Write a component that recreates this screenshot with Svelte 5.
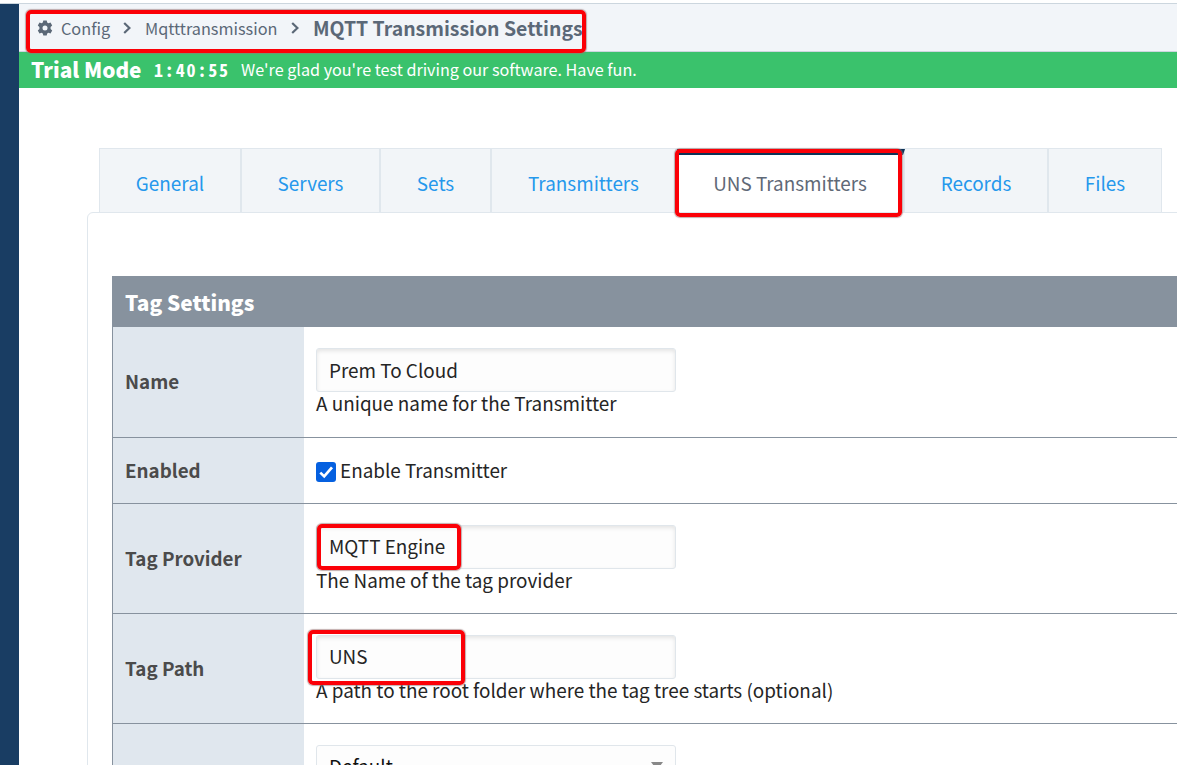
<script>
  const tabs = [
    { label: 'General', width: 142 },
    { label: 'Servers', width: 139 },
    { label: 'Sets', width: 111 },
    { label: 'Transmitters', width: 185 },
    { label: 'UNS Transmitters', width: 228, active: true },
    { label: 'Records', width: 144 },
    { label: 'Files', width: 113 }
  ];
</script>

<div class="page">
  <aside></aside>
  <main>
    <header>
      <svg class="gear" viewBox="0 0 16 16" width="16" height="16">
        <path fill-rule="evenodd" d="M6.300 .5h3.400l.5 2.100 1.200.7 2.100-.7 1.700 3-1.600 1.500v1.800l1.600 1.500-1.700 3-2.100-.7-1.200.7-.5 2.100H6.300l-.5-2.100-1.200-.7-2.100.7-1.700-3 1.600-1.500V7.100L.8 5.600l1.700-3 2.100.7 1.200-.7zM8 5.500a2.500 2.500 0 1 0 0 5 2.500 2.500 0 0 0 0-5z" />
      </svg>
      <span class="crumb config">Config</span>
      <svg class="chev" viewBox="0 0 8 12" width="8" height="12"><path d="M1.200 1 6.400 6l-5.200 5" /></svg>
      <span class="crumb module">Mqtttransmission</span>
      <svg class="chev" viewBox="0 0 8 12" width="8" height="12"><path d="M1.200 1 6.400 6l-5.200 5" /></svg>
      <strong>MQTT Transmission Settings</strong>
      <i class="mark mark-head"></i>
    </header>
    <div class="trial">
      <b>Trial Mode</b>
      <span class="timer">1:40:55</span>
      <span class="note">We're glad you're test driving our software. Have fun.</span>
    </div>
    <nav>
      {#each tabs as tab}
        <div class="tab" class:active={tab.active} style="width:{tab.width}px">
          <span>{tab.label}</span>
          {#if tab.active}<i class="mark mark-tab"></i>{/if}
        </div>
      {/each}
    </nav>
    <section class="panel">
      <div class="table">
        <h2>Tag Settings</h2>
        <div class="row first">
          <div class="label">Name</div>
          <div class="cell">
            <div class="input">Prem To Cloud</div>
            <p>A unique name for the Transmitter</p>
          </div>
        </div>
        <div class="row short">
          <div class="label">Enabled</div>
          <div class="cell check">
            <svg viewBox="0 0 20 20" width="20" height="20"><rect width="20" height="20" rx="3" fill="#0560e0" /><path d="M4.300 10.600 8.200 14.400 16 5.300" fill="none" stroke="#fff" stroke-width="2.700" /></svg>
            <span>Enable Transmitter</span>
          </div>
        </div>
        <div class="row">
          <div class="label">Tag Provider</div>
          <div class="cell">
            <div class="input raised">MQTT Engine<i class="mark mark-provider"></i></div>
            <p>The Name of the tag provider</p>
          </div>
        </div>
        <div class="row">
          <div class="label">Tag Path</div>
          <div class="cell">
            <div class="input raised">UNS<i class="mark mark-path"></i></div>
            <p>A path to the root folder where the tag tree starts (optional)</p>
          </div>
        </div>
        <div class="row">
          <div class="label"></div>
          <div class="cell">
            <div class="input select">Default<svg viewBox="0 0 12 8" width="12" height="8"><path d="M0 0h12L6 8z" fill="#888" /></svg></div>
          </div>
        </div>
      </div>
    </section>
  </main>
</div>

<style>
  :global(body) { background: #fff; overflow: hidden; }
  * { box-sizing: border-box; }
  .page {
    width: 1177px; height: 765px; overflow: hidden; display: flex; padding-top: 3px;
    font-family: "Noto Sans CJK SC", "Noto Sans", sans-serif;
    font-size: 18.900px; line-height: 26px; color: #252525; white-space: nowrap;
  }
  aside { width: 19px; flex: none; background: #193d63; border-top: 1px solid #ccd6de; }
  main { flex: 1; min-width: 0; }
  header {
    position: relative; height: 49px; display: flex; align-items: center; padding-left: 17px;
    background: #f2f5f9; border-top: 1px solid #ccd6de; border-bottom: 1px solid #ccd6de; color: #5b6877;
    font-size: 16.250px;
  }
  .gear { fill: #5b6877; margin: 1px 8px 0 1px; }
  .config { width: 49px; }
  .module { width: 133px; }
  .chev { fill: none; stroke: #5b6877; stroke-width: 2.200; margin: 1px 14px 0 13px; }
  strong { font-size: 19.430px; font-weight: 700; }
  .mark { position: absolute; border: 4px solid #fb0007; border-radius: 5px; box-shadow: 0 0 1px 1px #9b777799; z-index: 2; }
  .mark-head { left: 7px; top: 6px; width: 560px; height: 43px; }
  .trial { height: 36px; background: #3ac26c; color: #fff; display: flex; align-items: center; padding: 0 0 2px 12px; }
  .trial b { font-size: 20.800px; font-weight: 900; width: 123px; }
  .timer { font: 700 18px "Noto Sans Mono CJK SC", "Liberation Mono", monospace; letter-spacing: 1.850px; width: 87px; }
  .note { font-size: 16.150px; }
  nav { display: flex; width: 1063px; height: 64px; margin: 60px 0 0 80px; border-top: 1px solid #e0e7ed; border-left: 1px solid #e0e7ed; }
  .tab {
    position: relative; flex: none; height: 63px; display: flex; align-items: center; justify-content: center;
    border-right: 2px solid #e0e7ed; color: #2598ec; padding-top: 5px; background: #f2f5f8;
  }
  .tab:last-child { border-right-width: 1px; }
  .active { background: #fff; color: #5f6977; border-top: 6px solid #0c3357; padding-top: 0; }
  .active span { margin-top: -1px; }
  .mark-tab { left: -2px; top: -6px; width: 227px; height: 68px; }
  .panel { margin-left: 68px; width: 1110px; height: 560px; border: 1px solid #e0e7ed; border-radius: 6px 0 0 0; padding: 63px 0 0 24px; }
  .table { border-left: 1px solid #87929e; }
  h2 { margin: 0; height: 51px; background: #87929e; color: #fff; font-size: 20.800px; font-weight: 900; line-height: 53px; padding-left: 12px; }
  .row { display: flex; height: 110px; border-bottom: 1px solid #87929e; }
  .first { height: 111px; }
  .short { height: 66px; }
  .label { width: 191px; flex: none; background: #e0e7ee; padding: 0 0 2px 12px; display: flex; align-items: center; font-weight: 700; font-size: 18.800px; color: #4b4b4b; }
  .cell { padding: 21px 0 0 12px; }
  .input {
    position: relative; width: 360px; height: 44px; border: 1px solid #e0e6eb; border-radius: 3px; background: #fdfdfd;
    box-shadow: inset 0 2px 4px #0000001a; padding-left: 12px; line-height: 42px;
  }
  .raised { line-height: 40px; }
  p { margin: 0; line-height: 22px; }
  .check { display: flex; align-items: center; padding-top: 0; gap: 4px; }
  .check svg { margin-top: 3px; }
  .check span { margin-top: -2px; }
  .mark-provider { left: 0; top: -2px; width: 144px; height: 46px; }
  .mark-path { left: -9px; top: -6px; width: 157px; height: 55px; }
  .select { box-shadow: none; color: #111; line-height: 40px; }
  .select svg { position: absolute; right: 12px; top: 16px; }
</style>
